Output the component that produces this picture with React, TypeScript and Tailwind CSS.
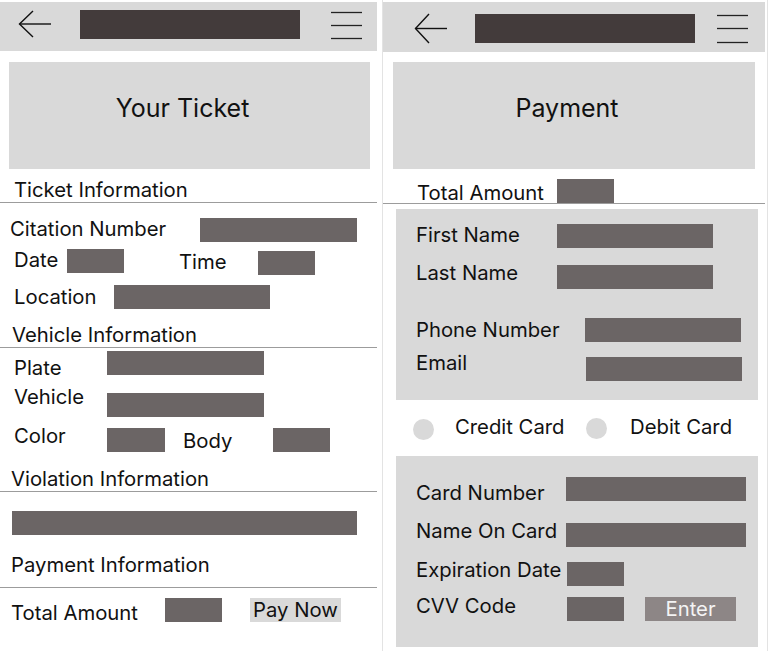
import React from 'react';

// wireframe: ticket details + payment form, side by side

function Bar({ className = '' }: { className?: string }) {
    return <div className={`h-[24px] shrink-0 bg-[#6b6565] ${className}`} />;
}

function Label({ className = '', children }: { className?: string; children: React.ReactNode }) {
    return <span className={`block shrink-0 whitespace-nowrap ${className}`}>{children}</span>;
}

function BackArrow({ className = '', tall = false }: { className?: string; tall?: boolean }) {
    const h = tall ? 32 : 30;
    const mid = tall ? 15.5 : 15;
    return (
        <svg className={`shrink-0 ${className}`} width={34} height={h} viewBox={`0 0 34 ${h}`} fill="none" stroke="#111" strokeWidth={1.4}>
            <path d={`M33 ${mid} H1.5`} />
            <path d={`M15 ${tall ? 1 : 2} L1.5 ${mid} L15 ${tall ? 30 : 28}`} />
        </svg>
    );
}

function Menu({ className = '', tall = false }: { className?: string; tall?: boolean }) {
    const ys = tall ? [1, 14, 28] : [2, 15, 28];
    return (
        <svg className={`shrink-0 ${className}`} width={33} height={30} viewBox="0 0 33 30" fill="none" stroke="#222" strokeWidth={1.3}>
            {ys.map(y => <path key={y} d={`M1 ${y + 0.5} H32`} />)}
        </svg>
    );
}

function TicketPanel() {
    return (
        <div className="w-[383px] shrink-0 pr-[5px] border-r border-[#e3e3e3] flex flex-col">
            <header className="mt-[2px] h-[49px] bg-[#d9d9d9] flex items-start">
                <BackArrow className="ml-[18px] mt-[7px]" />
                <div className="ml-[28px] mt-[8px] h-[29px] w-[220px] bg-[#433b3b]" />
                <Menu className="ml-[30px] mt-[8px]" />
            </header>

            <div className="mt-[11px] ml-[9px] mr-[7px] h-[107px] bg-[#d9d9d9] flex items-center justify-center pr-[14px] pb-[16px] text-[25px] leading-[30px]">
                Your Ticket
            </div>

            {/* Ticket Information */}
            <div className="mt-[9px] h-[25px] border-b border-[#9c9c9c] pl-[14px]">Ticket Information</div>
            <div className="flex items-start h-[45px]">
                <Label className="mt-[14px] ml-[10px] w-[190px]">Citation Number</Label>
                <Bar className="mt-[15px] w-[157px]" />
            </div>
            <div className="flex items-start h-[37px]">
                <Label className="ml-[14px] w-[53px]">Date</Label>
                <Bar className="mt-[1px] w-[57px]" />
                <Label className="ml-[55px] mt-[2px] w-[79px]">Time</Label>
                <Bar className="mt-[3px] w-[57px]" />
            </div>
            <div className="flex items-start h-[38px]">
                <Label className="ml-[14px] w-[100px]">Location</Label>
                <Bar className="w-[156px]" />
            </div>

            {/* Vehicle Information */}
            <div className="h-[25px] border-b border-[#9c9c9c] pl-[12px]">Vehicle Information</div>
            <div className="flex items-start h-[37px]">
                <Label className="ml-[14px] mt-[8px] w-[93px]">Plate</Label>
                <Bar className="mt-[3px] w-[157px]" />
            </div>
            <div className="flex items-start h-[39px]">
                <Label className="ml-[14px] w-[93px]">Vehicle</Label>
                <Bar className="mt-[8px] w-[157px]" />
            </div>
            <div className="flex items-start h-[43px]">
                <Label className="ml-[14px] w-[93px]">Color</Label>
                <Bar className="mt-[4px] w-[58px]" />
                <Label className="ml-[18px] mt-[5px] w-[90px]">Body</Label>
                <Bar className="mt-[4px] w-[57px]" />
            </div>

            {/* Violation Information */}
            <div className="h-[25px] border-b border-[#9c9c9c] pl-[11px]">Violation Information</div>
            <div className="flex items-start h-[61px]">
                <Bar className="ml-[12px] mt-[19px] w-[345px]" />
            </div>

            {/* Payment Information */}
            <div className="h-[35px] border-b border-[#9c9c9c] pl-[11px]">Payment Information</div>
            <div className="flex items-start">
                <Label className="ml-[11px] mt-[13px] w-[154px]">Total Amount</Label>
                <Bar className="mt-[10px] w-[57px]" />
                <button className="ml-[28px] mt-[10px] h-[24px] w-[91px] bg-[#d9d9d9] flex items-center justify-center leading-[24px]">
                    Pay Now
                </button>
            </div>
        </div>
    );
}

function PaymentPanel() {
    return (
        <div className="w-[385px] shrink-0 pr-[2px] border-r border-[#e3e3e3] flex flex-col">
            <header className="mt-[2px] h-[50px] bg-[#d9d9d9] flex items-start">
                <BackArrow tall className="ml-[31px] mt-[11px]" />
                <div className="ml-[27px] mt-[12px] h-[29px] w-[220px] bg-[#433b3b]" />
                <Menu tall className="ml-[21px] mt-[12px]" />
            </header>

            <div className="mt-[10px] ml-[10px] mr-[10px] h-[107px] bg-[#d9d9d9] flex items-center justify-center pr-[14px] pb-[16px] text-[25px] leading-[30px]">
                Payment
            </div>

            <div className="flex items-start h-[35px] border-b border-[#9c9c9c]">
                <Label className="ml-[34px] mt-[12px] w-[140px]">Total Amount</Label>
                <Bar className="mt-[10px] w-[57px]" />
            </div>

            {/* personal details */}
            <div className="mt-[5px] ml-[13px] w-[362px] h-[191px] bg-[#d9d9d9] flex flex-col pl-[20px]">
                <div className="flex items-start h-[52px]">
                    <Label className="mt-[14px] w-[141px]">First Name</Label>
                    <Bar className="mt-[15px] w-[156px]" />
                </div>
                <div className="flex items-start h-[57px]">
                    <Label className="w-[141px]">Last Name</Label>
                    <Bar className="mt-[4px] w-[156px]" />
                </div>
                <div className="flex items-start h-[33px]">
                    <Label className="w-[169px]">Phone Number</Label>
                    <Bar className="w-[156px]" />
                </div>
                <div className="flex items-start">
                    <Label className="w-[170px]">Email</Label>
                    <Bar className="mt-[6px] w-[156px]" />
                </div>
            </div>

            {/* card type */}
            <div className="flex items-start h-[56px]">
                <span className="ml-[30px] mt-[19px] h-[21px] w-[21px] shrink-0 rounded-full bg-[#d9d9d9]" />
                <Label className="ml-[21px] mt-[15px] w-[131px]">Credit Card</Label>
                <span className="mt-[18px] h-[21px] w-[21px] shrink-0 rounded-full bg-[#d9d9d9]" />
                <Label className="ml-[23px] mt-[15px]">Debit Card</Label>
            </div>

            {/* card details */}
            <div className="ml-[13px] w-[362px] h-[191px] bg-[#d9d9d9] flex flex-col pl-[20px]">
                <div className="flex items-start h-[63px]">
                    <Label className="mt-[25px] w-[150px]">Card Number</Label>
                    <Bar className="mt-[21px] w-[180px]" />
                </div>
                <div className="flex items-start h-[39px]">
                    <Label className="w-[150px]">Name On Card</Label>
                    <Bar className="mt-[4px] w-[180px]" />
                </div>
                <div className="flex items-start h-[36px]">
                    <Label className="w-[151px]">Expiration Date</Label>
                    <Bar className="mt-[4px] w-[57px]" />
                </div>
                <div className="flex items-start">
                    <Label className="w-[151px]">CVV Code</Label>
                    <Bar className="mt-[3px] w-[57px]" />
                    <button className="ml-[21px] mt-[3px] h-[24px] w-[91px] bg-[#8d8686] text-[#f4f4f4] flex items-center justify-center leading-[24px]">
                        Enter
                    </button>
                </div>
            </div>
        </div>
    );
}

export default function App() {
    return (
        <div className="h-[651px] w-[768px] overflow-hidden bg-white flex text-[20.3px] leading-[24px] text-[#111] font-['Inter','Noto_Sans',sans-serif]">
            <TicketPanel />
            <PaymentPanel />
        </div>
    );
}
